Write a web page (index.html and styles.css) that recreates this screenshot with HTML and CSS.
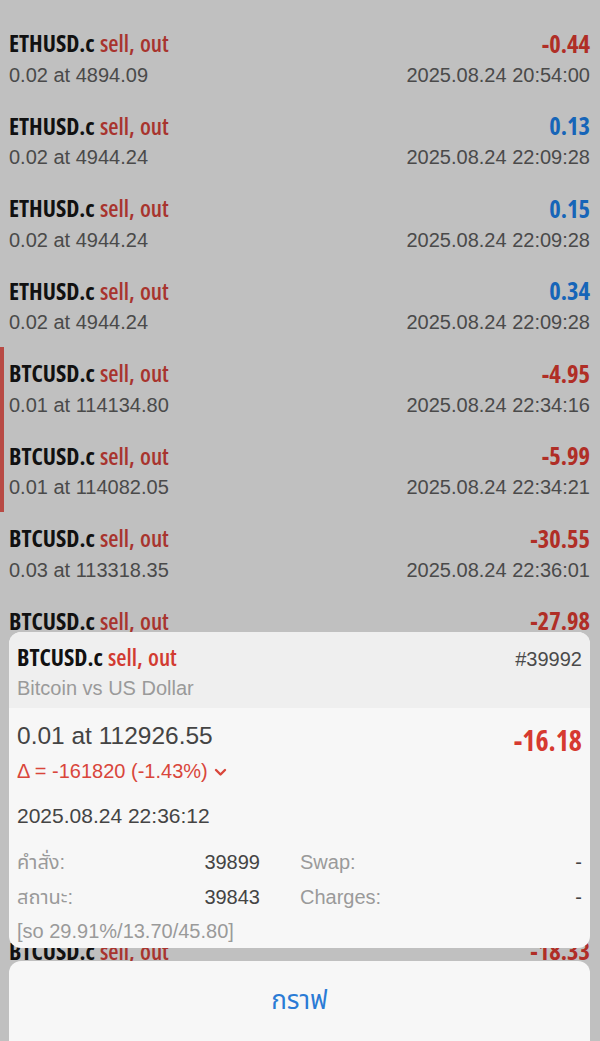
FILE: index.html
```html
<!DOCTYPE html>
<html lang="th">
<head>
    <meta charset="UTF-8">
    <meta name="viewport" content="width=device-width, initial-scale=1.0">
    <title>History</title>
    <link rel="stylesheet" href="styles.css">
</head>
<body>
    <div class="deals">
        <div class="deal">
            <div class="line"><span class="sym">ETHUSD.c <span class="side">sell, out</span></span><span class="pl loss">-0.44</span></div>
            <div class="line sub"><span>0.02 at 4894.09</span><span>2025.08.24 20:54:00</span></div>
        </div>
        <div class="deal">
            <div class="line"><span class="sym">ETHUSD.c <span class="side">sell, out</span></span><span class="pl profit">0.13</span></div>
            <div class="line sub"><span>0.02 at 4944.24</span><span>2025.08.24 22:09:28</span></div>
        </div>
        <div class="deal">
            <div class="line"><span class="sym">ETHUSD.c <span class="side">sell, out</span></span><span class="pl profit">0.15</span></div>
            <div class="line sub"><span>0.02 at 4944.24</span><span>2025.08.24 22:09:28</span></div>
        </div>
        <div class="deal">
            <div class="line"><span class="sym">ETHUSD.c <span class="side">sell, out</span></span><span class="pl profit">0.34</span></div>
            <div class="line sub"><span>0.02 at 4944.24</span><span>2025.08.24 22:09:28</span></div>
        </div>
        <div class="deal marked">
            <div class="line"><span class="sym">BTCUSD.c <span class="side">sell, out</span></span><span class="pl loss">-4.95</span></div>
            <div class="line sub"><span>0.01 at 114134.80</span><span>2025.08.24 22:34:16</span></div>
        </div>
        <div class="deal marked">
            <div class="line"><span class="sym">BTCUSD.c <span class="side">sell, out</span></span><span class="pl loss">-5.99</span></div>
            <div class="line sub"><span>0.01 at 114082.05</span><span>2025.08.24 22:34:21</span></div>
        </div>
        <div class="deal">
            <div class="line"><span class="sym">BTCUSD.c <span class="side">sell, out</span></span><span class="pl loss">-30.55</span></div>
            <div class="line sub"><span>0.03 at 113318.35</span><span>2025.08.24 22:36:01</span></div>
        </div>
        <!-- rows partly under the details sheet -->
        <div class="deal">
            <div class="line"><span class="sym">BTCUSD.c <span class="side">sell, out</span></span><span class="pl loss">-27.98</span></div>
        </div>
        <div class="deal"></div>
        <div class="deal"></div>
        <div class="deal"></div>
        <div class="deal">
            <div class="line"><span class="sym">BTCUSD.c <span class="side">sell, out</span></span><span class="pl loss">-18.33</span></div>
        </div>
    </div>

    <!-- deal details sheet -->
    <div class="sheet">
        <div class="sheet-head">
            <div class="head-row">
                <span class="sym">BTCUSD.c <span class="side-bright">sell, out</span></span>
                <span class="ticket">#39992</span>
            </div>
            <div class="desc">Bitcoin vs US Dollar</div>
        </div>
        <div class="sheet-body">
            <div class="price-row">
                <div>
                    <div class="price">0.01 at 112926.55</div>
                    <div class="delta">Δ = -161820 (-1.43%)
                        <svg class="chev" width="13" height="9" viewBox="0 0 13 9"><path d="M2 2l4.5 4.5L11 2" fill="none" stroke="#d9463b" stroke-width="2.4" stroke-linecap="round" stroke-linejoin="round"/></svg>
                    </div>
                </div>
                <div class="big-pl">-16.18</div>
            </div>
            <div class="time">2025.08.24 22:36:12</div>
            <div class="details">
                <span class="label">คำสั่ง:</span><span class="val">39899</span>
                <span class="label">Swap:</span><span class="val">-</span>
                <span class="label">สถานะ:</span><span class="val">39843</span>
                <span class="label">Charges:</span><span class="val">-</span>
            </div>
            <div class="comment">[so 29.91%/13.70/45.80]</div>
        </div>
    </div>

    <div class="action-sheet">
        <div class="action">กราฟ</div>
    </div>
</body>
</html>
```

FILE: styles.css
```css
* {
    margin: 0;
    padding: 0;
    box-sizing: border-box;
}

body {
    font-family: 'Liberation Sans', Arial, 'Noto Sans Thai', 'Noto Sans', sans-serif;
    background: #c0c0c0;
    height: 1041px;
    overflow: hidden;
    position: relative;
}

.deals {
    padding-top: 17px;
}

.deal {
    height: 82.5px;
    padding: 9px 10px 0 9px;
}

.deal.marked {
    box-shadow: inset 4px 0 0 #b84a44;
}

.line {
    display: flex;
    justify-content: space-between;
    align-items: center;
    height: 34px;
}

.line.sub {
    height: 30px;
    font-size: 20px;
    color: #4a4a4a;
}

.sym {
    font-family: 'Open Sans', sans-serif;
    font-stretch: 75%;
    font-weight: 700;
    font-size: 23.5px;
    word-spacing: 1px;
    color: #111;
}

.side {
    font-stretch: 82%;
    font-weight: 600;
    color: #a8342e;
}

.pl {
    font-family: 'Open Sans', sans-serif;
    font-stretch: 75%;
    font-weight: 700;
    font-size: 24.5px;
    color: #b02e26;
}

.pl.profit {
    color: #1665b8;
}

.sheet {
    position: absolute;
    top: 632px;
    left: 9px;
    width: 581px;
    height: 316px;
    border-radius: 12px;
    overflow: hidden;
    background: #f7f7f7;
}

.sheet-head {
    height: 76px;
    background: #efefef;
    padding: 8px 8px 0 8px;
}

.head-row {
    display: flex;
    justify-content: space-between;
    align-items: flex-start;
    height: 34px;
    line-height: 34px;
}

.side-bright {
    font-stretch: 82%;
    font-weight: 600;
    color: #d23b31;
}

.ticket {
    font-size: 20px;
    color: #4a4a4a;
    line-height: 24px;
    padding-top: 7px;
}

.desc {
    font-size: 20px;
    color: #9a9a9a;
    line-height: 28px;
}

.sheet-body {
    padding: 12px 8px 0 8px;
}

.price-row {
    display: flex;
    justify-content: space-between;
    align-items: flex-start;
}

.price {
    font-size: 24.5px;
    line-height: 32px;
    color: #444;
}

.delta {
    font-size: 20px;
    line-height: 38px;
    color: #d9463b;
    display: flex;
    align-items: center;
    gap: 6px;
}

.chev {
    margin-top: 2px;
}

.big-pl {
    font-family: 'Open Sans', sans-serif;
    font-stretch: 75%;
    font-weight: 700;
    font-size: 28px;
    line-height: 40px;
    color: #d63a30;
}

.time {
    margin-top: 11px;
    font-size: 21px;
    line-height: 30px;
    color: #444;
}

.details {
    margin-top: 14px;
    display: grid;
    grid-template-columns: 120px 123px 180px 1fr;
    font-size: 20px;
    line-height: 35px;
}

.details .label {
    color: #9a9a9a;
}

.details .label:nth-child(3),
.details .label:nth-child(7) {
    padding-left: 40px;
}

.details .val {
    text-align: right;
    color: #444;
}

.comment {
    font-size: 20px;
    line-height: 32px;
    color: #9a9a9a;
}

.action-sheet {
    position: absolute;
    top: 961px;
    left: 9px;
    width: 581px;
    height: 120px;
    border-radius: 12px;
    background: #f7f7f7;
}

.action {
    text-align: center;
    font-size: 26px;
    line-height: 78px;
    color: #2a7bd5;
}
```
